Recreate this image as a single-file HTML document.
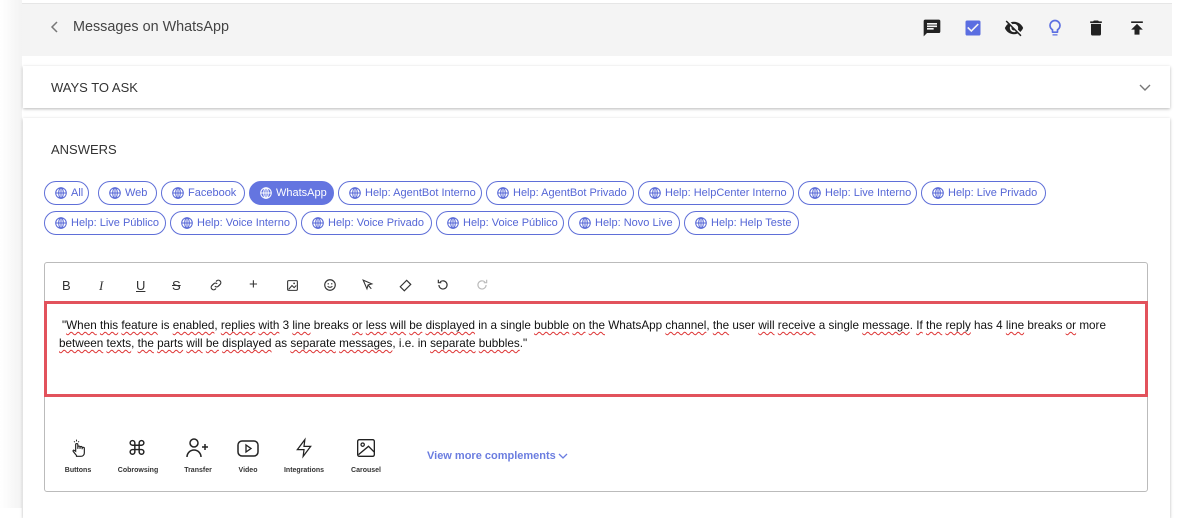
<!DOCTYPE html>
<html><head><meta charset="utf-8"><style>
*{box-sizing:border-box;margin:0;padding:0}
body{width:1191px;height:508px;background:#fff;font-family:"Liberation Sans",Arial,sans-serif;position:relative;overflow:hidden;color:#222}
.abs{position:absolute}
.left{left:0;top:0;width:22px;height:508px;background:linear-gradient(90deg,#fff,#f3f3f3)}
.hdr{left:22px;top:3px;width:1150px;height:53px;background:#f4f4f4;border-top:1px solid #e6e6e6}
.card{background:#fff;box-shadow:0 1px 3px rgba(0,0,0,.28)}
.chip{position:absolute;height:24px;border:1px solid #5f6fd8;border-radius:12px;color:#5566d6;font-size:11px;line-height:22px;padding-left:26px;white-space:nowrap}
.chip svg{position:absolute;left:10px;top:5px}
.chip.on{background:#6475e0;color:#fff;border-color:#6475e0}
.tb{position:absolute;top:278px;font-size:13px;color:#333}
.lab{position:absolute;top:467px;font-size:7px;font-weight:bold;color:#333;transform:translateX(-50%)}
.txt{font-size:11.7px;line-height:18px;color:#111}
.u{text-decoration:underline wavy #d33;text-decoration-thickness:1px;text-underline-offset:2px}
</style></head><body>
<div class="abs left"></div>
<div class="abs hdr"></div>
<svg class="abs" style="left:50px;top:21px" width="10" height="12" viewBox="0 0 10 12"><path d="M7 1 2 6l5 5" fill="none" stroke="#777" stroke-width="1.5"/></svg>
<div class="abs" style="left:73px;top:19px;font-size:14.4px;color:#444">Messages on WhatsApp</div>
<svg class="abs" style="left:922px;top:18px" width="20" height="20" viewBox="0 0 24 24"><path d="M20 2H4a2 2 0 0 0-2 2v18l4-4h14a2 2 0 0 0 2-2V4a2 2 0 0 0-2-2zM6 9h12v2H6zm8 5H6v-2h8zm4-6H6V6h12z" fill="#222"/></svg>
<svg class="abs" style="left:963px;top:18px" width="20" height="20" viewBox="0 0 24 24"><path d="M19 3H5a2 2 0 0 0-2 2v14a2 2 0 0 0 2 2h14a2 2 0 0 0 2-2V5a2 2 0 0 0-2-2zm-9 14-5-5 1.4-1.4 3.6 3.6 7.6-7.6L19 8z" fill="#5b6ee1"/></svg>
<svg class="abs" style="left:1003px;top:18px" width="22" height="20" viewBox="0 0 24 24"><path d="M12 7a5 5 0 0 1 5 5c0 .65-.13 1.26-.36 1.830l2.920 2.920A11.8 11.8 0 0 0 23 12c-1.73-4.39-6-7.5-11-7.5-1.4 0-2.74.25-3.98.7l2.160 2.160C10.74 7.130 11.35 7 12 7zM2 4.27l2.28 2.28.46.46A11.8 11.8 0 0 0 1 12c1.73 4.39 6 7.5 11 7.5 1.55 0 3.03-.3 4.38-.84l.42.42L19.73 22 21 20.73 3.27 3zM7.53 9.8l1.55 1.55A2.8 2.8 0 0 0 9 12a3 3 0 0 0 3 3c.22 0 .44-.03.65-.08l1.55 1.55A5 5 0 0 1 7 12c0-.79.2-1.530.53-2.2z" fill="#222"/></svg>
<svg class="abs" style="left:1045px;top:17px" width="20" height="22" viewBox="0 0 24 24"><path d="M9 21h6v-1.5H9zM12 2a7 7 0 0 0-4 12.74V17a1 1 0 0 0 1 1h6a1 1 0 0 0 1-1v-2.26A7 7 0 0 0 12 2zm2.85 11.1-.85.6V16h-4v-2.3l-.85-.6A5 5 0 1 1 14.85 13.1z" fill="#5b6ee1"/></svg>
<svg class="abs" style="left:1086px;top:18px" width="20" height="20" viewBox="0 0 24 24"><path d="M6 19a2 2 0 0 0 2 2h8a2 2 0 0 0 2-2V7H6zM19 4h-3.5l-1-1h-5l-1 1H5v2h14z" fill="#222"/></svg>
<svg class="abs" style="left:1127px;top:18px" width="20" height="20" viewBox="0 0 24 24"><path d="M5 4v2h14V4zm0 10h4v6h6v-6h4l-7-7z" fill="#222"/></svg>

<div class="abs card" style="left:23px;top:66px;width:1147px;height:42px"></div>
<div class="abs" style="left:51px;top:80px;font-size:13px;color:#333">WAYS TO ASK</div>
<svg class="abs" style="left:1139px;top:84px" width="12" height="8" viewBox="0 0 12 8"><path d="M1 1l5 5 5-5" fill="none" stroke="#777" stroke-width="1.4"/></svg>

<div class="abs card" style="left:23px;top:118px;width:1147px;height:400px"></div>
<div class="abs" style="left:51px;top:142px;font-size:13px;color:#333">ANSWERS</div>

<svg width="0" height="0" style="position:absolute"><defs><g id="g"><circle cx="6" cy="6" r="5.3" fill="none" stroke="currentColor" stroke-width="1"/><ellipse cx="6" cy="6" rx="2.3" ry="5.3" fill="none" stroke="currentColor" stroke-width="1"/><path d="M.7 6h10.6M6 .7v10.6" stroke="currentColor" stroke-width="1"/></g></defs></svg>
<div class="chip" style="left:44px;top:181px;width:45px"><svg width="12" height="12"><use href="#g"/></svg>All</div>
<div class="chip" style="left:98px;top:181px;width:59px"><svg width="12" height="12"><use href="#g"/></svg>Web</div>
<div class="chip" style="left:161px;top:181px;width:84px"><svg width="12" height="12"><use href="#g"/></svg>Facebook</div>
<div class="chip on" style="left:249px;top:181px;width:85px"><svg width="12" height="12"><use href="#g"/></svg>WhatsApp</div>
<div class="chip" style="left:338px;top:181px;width:144px"><svg width="12" height="12"><use href="#g"/></svg>Help: AgentBot Interno</div>
<div class="chip" style="left:486px;top:181px;width:148px"><svg width="12" height="12"><use href="#g"/></svg>Help: AgentBot Privado</div>
<div class="chip" style="left:638px;top:181px;width:156px"><svg width="12" height="12"><use href="#g"/></svg>Help: HelpCenter Interno</div>
<div class="chip" style="left:798px;top:181px;width:119px"><svg width="12" height="12"><use href="#g"/></svg>Help: Live Interno</div>
<div class="chip" style="left:921px;top:181px;width:125px"><svg width="12" height="12"><use href="#g"/></svg>Help: Live Privado</div>
<div class="chip" style="left:44px;top:211px;width:122px"><svg width="12" height="12"><use href="#g"/></svg>Help: Live Público</div>
<div class="chip" style="left:170px;top:211px;width:127px"><svg width="12" height="12"><use href="#g"/></svg>Help: Voice Interno</div>
<div class="chip" style="left:301px;top:211px;width:131px"><svg width="12" height="12"><use href="#g"/></svg>Help: Voice Privado</div>
<div class="chip" style="left:436px;top:211px;width:128px"><svg width="12" height="12"><use href="#g"/></svg>Help: Voice Público</div>
<div class="chip" style="left:568px;top:211px;width:112px"><svg width="12" height="12"><use href="#g"/></svg>Help: Novo Live</div>
<div class="chip" style="left:684px;top:211px;width:115px"><svg width="12" height="12"><use href="#g"/></svg>Help: Help Teste</div>

<div class="abs" style="left:44px;top:262px;width:1104px;height:230px;border:1px solid #bbb;border-radius:3px"></div>
<div class="tb" style="left:62px">B</div>
<div class="tb" style="left:99px;font-style:italic;font-family:'Liberation Serif',serif">I</div>
<div class="tb" style="left:136px;text-decoration:underline">U</div>
<div class="tb" style="left:172px;text-decoration:line-through">S</div>
<svg class="abs" style="left:209px;top:278px" width="14" height="14" viewBox="0 0 24 24"><path d="M10 14a4 4 0 0 0 6 0l3-3a4 4 0 0 0-6-6l-1 1M14 10a4 4 0 0 0-6 0l-3 3a4 4 0 0 0 6 6l1-1" fill="none" stroke="#333" stroke-width="2"/></svg>
<div class="tb" style="left:249px;top:276px;font-size:15px">+</div>
<svg class="abs" style="left:286px;top:279px" width="13" height="13" viewBox="0 0 24 24"><rect x="3" y="3" width="18" height="18" rx="2" fill="none" stroke="#333" stroke-width="2"/><path d="M5 19l6-7 4 4 4-4" fill="none" stroke="#333" stroke-width="2"/><circle cx="15" cy="8" r="1.6" fill="#333"/></svg>
<svg class="abs" style="left:323px;top:278px" width="14" height="14" viewBox="0 0 24 24"><circle cx="12" cy="12" r="9" fill="none" stroke="#333" stroke-width="2"/><circle cx="9" cy="10" r="1.2" fill="#333"/><circle cx="15" cy="10" r="1.2" fill="#333"/><path d="M8 14a5 5 0 0 0 8 0" fill="none" stroke="#333" stroke-width="2"/></svg>
<svg class="abs" style="left:361px;top:278px" width="13" height="14" viewBox="0 0 24 24"><path d="M4 3l16 7-7 2-2 7z" fill="none" stroke="#333" stroke-width="2"/><path d="M13 12l6 7" stroke="#333" stroke-width="2"/></svg>
<svg class="abs" style="left:398px;top:278px" width="15" height="14" viewBox="0 0 24 24"><path d="M3 15 14 4l7 7-11 11z" fill="none" stroke="#333" stroke-width="2"/></svg>
<svg class="abs" style="left:436px;top:278px" width="14" height="14" viewBox="0 0 24 24"><path d="M5 12a7 7 0 1 0 2-5" fill="none" stroke="#333" stroke-width="2"/><path d="M4 3v5h5" fill="none" stroke="#333" stroke-width="2"/></svg>
<svg class="abs" style="left:475px;top:278px" width="14" height="14" viewBox="0 0 24 24"><path d="M19 12a7 7 0 1 1-2-5" fill="none" stroke="#bbb" stroke-width="2"/><path d="M20 3v5h-5" fill="none" stroke="#bbb" stroke-width="2"/></svg>

<div class="abs" style="left:44px;top:301px;width:1104px;height:96px;border:3px solid #e2525c"></div>
<div class="abs txt" style="left:62px;top:317px;width:1080px">"<span class="u">When</span> <span class="u">this</span> <span class="u">feature</span> is <span class="u">enabled</span>, <span class="u">replies</span> <span class="u">with</span> 3 <span class="u">line</span> breaks <span class="u">or</span> <span class="u">less</span> <span class="u">will</span> <span class="u">be</span> <span class="u">displayed</span> in a single <span class="u">bubble</span> <span class="u">on</span> <span class="u">the</span> WhatsApp <span class="u">channel</span>, <span class="u">the</span> user <span class="u">will</span> <span class="u">receive</span> a single <span class="u">message</span>. <span class="u">If</span> <span class="u">the</span> <span class="u">reply</span> has 4 <span class="u">line</span> breaks <span class="u">or</span> more<br><span class="u" style="margin-left:-3px">between</span> <span class="u">texts</span>, <span class="u">the</span> <span class="u">parts</span> <span class="u">will</span> <span class="u">be</span> <span class="u">displayed</span> as <span class="u">separate</span> <span class="u">messages</span>, i.e. in <span class="u">separate</span> <span class="u">bubbles</span>."</div>

<svg class="abs" style="left:69px;top:437px" width="20" height="22" viewBox="0 0 24 24"><path d="M9 21l-4-5c-.6-.8.4-1.8 1.2-1.2L8 16V8a1.3 1.3 0 0 1 2.6 0v5 -2a1.3 1.3 0 0 1 2.6 0v2-1.5a1.3 1.3 0 0 1 2.6 0v2-1a1.3 1.3 0 0 1 2.6 0V18a4 4 0 0 1-4 4H9z" fill="none" stroke="#222" stroke-width="1.4"/><path d="M9 2v2M6 4l1 1M12 4l-1 1" stroke="#222" stroke-width="1.2"/></svg>
<div class="abs" style="left:127px;top:436px;font-size:20px;color:#222">⌘</div>
<svg class="abs" style="left:186px;top:438px" width="24" height="20" viewBox="0 0 24 20"><circle cx="8" cy="5" r="4" fill="none" stroke="#222" stroke-width="1.5"/><path d="M1 19a7 7 0 0 1 14 0" fill="none" stroke="#222" stroke-width="1.5"/><path d="M19 6v6M16 9h6" stroke="#222" stroke-width="1.5"/></svg>
<svg class="abs" style="left:237px;top:440px" width="22" height="18" viewBox="0 0 22 18"><rect x="1" y="1" width="20" height="15" rx="4" fill="none" stroke="#222" stroke-width="1.5"/><path d="M9 5v7l5-3.5z" fill="none" stroke="#222" stroke-width="1.3"/></svg>
<svg class="abs" style="left:294px;top:437px" width="20" height="22" viewBox="0 0 24 24"><path d="M13 2 4 14h8l-1 8 9-12h-8z" fill="none" stroke="#222" stroke-width="1.5"/></svg>
<svg class="abs" style="left:356px;top:438px" width="20" height="20" viewBox="0 0 24 24"><rect x="2" y="2" width="20" height="20" rx="2" fill="none" stroke="#222" stroke-width="1.6"/><circle cx="8" cy="8" r="2" fill="none" stroke="#222" stroke-width="1.5"/><path d="M3 20 15 10l7 7" fill="none" stroke="#222" stroke-width="1.6"/></svg>
<div class="lab" style="left:78px">Buttons</div>
<div class="lab" style="left:138px">Cobrowsing</div>
<div class="lab" style="left:198px">Transfer</div>
<div class="lab" style="left:248px">Video</div>
<div class="lab" style="left:304px">Integrations</div>
<div class="lab" style="left:366px">Carousel</div>
<div class="abs" style="left:427px;top:450px;font-size:11px;font-weight:bold;color:#6b7de0">View more complements</div>
<svg class="abs" style="left:558px;top:453px" width="10" height="7" viewBox="0 0 10 7"><path d="M1 1l4 4 4-4" fill="none" stroke="#6b7de0" stroke-width="1.3"/></svg>
</body></html>
